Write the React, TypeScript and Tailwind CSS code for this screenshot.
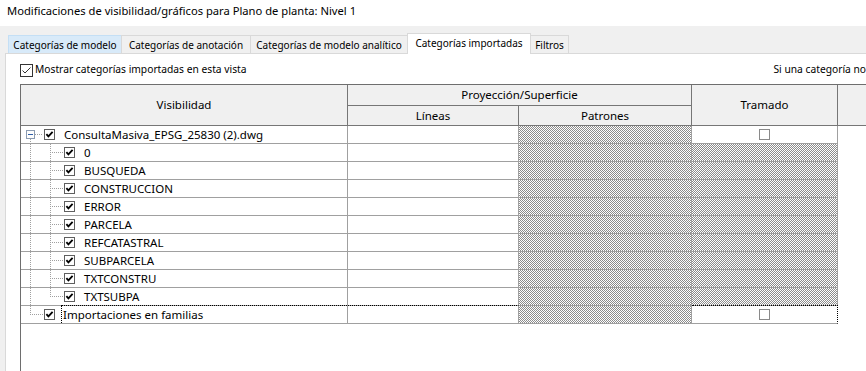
import type { ReactNode } from 'react'

const layers = ['0', 'BUSQUEDA', 'CONSTRUCCION', 'ERROR', 'PARCELA', 'REFCATASTRAL', 'SUBPARCELA', 'TXTCONSTRU', 'TXTSUBPA']

// trama gris de las celdas bloqueadas (1px ajedrez)
const hatch = 'bg-[conic-gradient(#8c8c8c_25%,#fff_0_50%,#8c8c8c_0_75%,#fff_0)] bg-size-[2px_2px]'

function TreeCheck() {
  return (
    <svg width="11" height="11" viewBox="0 0 11 11" className="shrink-0">
      <rect x="0.5" y="0.5" width="10" height="10" fill="#fff" stroke="#5f5f5f" />
      <path d="M2.4 5.2 L4.4 7.4 L8.6 2.8" fill="none" stroke="#000" strokeWidth="1.8" />
    </svg>
  )
}

function EmptyBox() {
  return (
    <svg width="11" height="11" viewBox="0 0 11 11" className="shrink-0">
      <rect x="0.5" y="0.5" width="10" height="10" fill="#fff" stroke="#8a8a8a" />
    </svg>
  )
}

function Dots({ d }: { d: string }) {
  return <path d={d} stroke="#a0a0a0" strokeDasharray="1 1" shapeRendering="crispEdges" fill="none" />
}

function Row({ tree, tramado }: { tree: ReactNode; tramado: 'box' | 'hatch' }) {
  return (
    <div className="flex h-[18px] shrink-0">
      <div className="w-[327px] h-[18px] border-r border-b border-[#a0a0a0] flex items-center">{tree}</div>
      <div className="w-[171px] h-[18px] border-r border-b border-[#a0a0a0] bg-white" />
      <div className={`w-[173px] h-[18px] border-r border-b border-[#a0a0a0] ${hatch}`} />
      {tramado === 'box' ? (
        <div className="w-[146px] h-[18px] border-r border-b border-[#a0a0a0] flex items-center justify-center">
          <EmptyBox />
        </div>
      ) : (
        <div className={`w-[146px] h-[18px] border-r border-b border-[#a0a0a0] ${hatch}`} />
      )}
    </div>
  )
}

export default function App() {
  return (
    <div className="w-[866px] h-[371px] overflow-hidden bg-[#f0f0f0] font-['Noto_Sans',sans-serif] text-[10px] text-black flex flex-col">
      <div className="h-[26px] shrink-0 bg-white pl-[7px] pt-[3px] leading-[16px] text-[11.2px] whitespace-nowrap">
        Modificaciones de visibilidad/gráficos para Plano de planta: Nivel 1
      </div>

      {/* Pestañas */}
      <div className="h-[27px] shrink-0 pt-[7px] pl-[8px] flex items-end relative z-10 whitespace-nowrap leading-[16px]">
        <div className="w-[114px] h-[18px] bg-[#d8eaf9] border-t border-x border-[#c4dff5] flex items-center justify-center">
          Categorías de modelo
        </div>
        <div className="w-[130px] h-[18px] -ml-px border-t border-x border-[#d9d9d9] flex items-center justify-center">
          Categorías de anotación
        </div>
        <div className="w-[158px] h-[18px] -ml-px border-t border-x border-[#d9d9d9] flex items-center justify-center">
          Categorías de modelo analítico
        </div>
        <div className="w-[124px] h-[21px] -ml-px -mb-px bg-white border-t border-x border-[#d9d9d9] flex items-center justify-center pb-[2px]">
          Categorías importadas
        </div>
        <div className="w-[39px] h-[18px] -ml-px border-t border-x border-[#d9d9d9] flex items-center justify-center">
          Filtros
        </div>
      </div>

      <div className="ml-[5px] flex-1 min-h-0 bg-white border-l border-t border-[#d9d9d9] pl-[14px] pt-[8px]">
        <div className="h-[16px] flex items-center whitespace-nowrap text-[10.25px]">
          <div className="w-[757px] flex items-center">
            <svg width="13" height="13" viewBox="0 0 13 13" className="shrink-0">
              <rect x="0.5" y="0.5" width="12" height="12" fill="#fff" stroke="#333" />
              <path d="M2.5 6.5 L5 9 L10.5 3.5" fill="none" stroke="#333" strokeWidth="1" />
            </svg>
            <span className="ml-[2px]">Mostrar categorías importadas en esta vista</span>
          </div>
          <span>Si una categoría no</span>
        </div>

        {/* Tabla */}
        <div className="mt-[6px] h-[320px] border-t border-l border-[#6e6e6e] flex flex-col text-[11.5px]">
          <div className="grid grid-cols-[327px_171px_173px_146px_1fr] grid-rows-[21px_20px] bg-[#f0f0f0] shrink-0 whitespace-nowrap">
            <div className="col-start-1 row-start-1 row-span-2 border-r border-b border-[#767676] flex items-center justify-center">Visibilidad</div>
            <div className="col-start-2 col-span-2 row-start-1 border-r border-b border-[#767676] flex items-center justify-center">Proyección/Superficie</div>
            <div className="col-start-4 row-start-1 row-span-2 border-r border-b border-[#767676] flex items-center justify-center">Tramado</div>
            <div className="col-start-5 row-start-1 row-span-2 border-b border-[#767676]" />
            <div className="col-start-2 row-start-2 border-r border-b border-[#767676] flex items-center justify-center">Líneas</div>
            <div className="col-start-3 row-start-2 border-r border-b border-[#767676] flex items-center justify-center">Patrones</div>
          </div>

          <Row
            tramado="box"
            tree={
              <>
                <svg width="23" height="17" className="shrink-0">
                  <rect x="5.5" y="4.5" width="8" height="8" fill="#fdfdfd" stroke="#8c9cb2" shapeRendering="crispEdges" />
                  <path d="M7 8.5h5" stroke="#2f5fa8" shapeRendering="crispEdges" />
                  <Dots d="M14 8.5h8" />
                  <Dots d="M9.5 13v4" />
                </svg>
                <TreeCheck />
                <span className="ml-[9px] whitespace-nowrap">ConsultaMasiva_EPSG_25830 (2).dwg</span>
              </>
            }
          />

          {layers.map((name, i) => (
            <Row
              key={name}
              tramado="hatch"
              tree={
                <>
                  <svg width="43" height="17" className="shrink-0">
                    <Dots d="M9.5 0v17" />
                    <Dots d={i === layers.length - 1 ? 'M29.5 0v9' : 'M29.5 0v17'} />
                    <Dots d="M31 8.5h11" />
                  </svg>
                  <TreeCheck />
                  <span className="ml-[9px] whitespace-nowrap">{name}</span>
                </>
              }
            />
          ))}

          {/* fila con foco */}
          <div className="flex h-[18px] shrink-0">
            <div className="w-[327px] h-[18px] border-r border-b border-[#a0a0a0] flex items-center">
              <svg width="23" height="17" className="shrink-0">
                <Dots d="M9.5 0v9" />
                <Dots d="M11 8.5h11" />
              </svg>
              <TreeCheck />
              <div className="ml-[6px] -mt-px self-start h-[18px] flex-1 border-t border-l border-dotted border-black pl-[1px] flex items-center whitespace-nowrap">
                Importaciones en familias
              </div>
            </div>
            <div className="w-[171px] -mt-px h-[19px] border-t border-r border-b border-dotted [border-right-style:solid] [border-bottom-style:solid] border-[#a0a0a0] border-t-black" />
            <div className={`w-[173px] h-[18px] border-r border-b border-[#a0a0a0] ${hatch}`} />
            <div className="w-[146px] -mt-px h-[19px] border-t border-r border-b border-dotted [border-bottom-style:solid] border-t-black border-r-black border-b-[#a0a0a0] flex items-center justify-center">
              <EmptyBox />
            </div>
          </div>
        </div>
      </div>
    </div>
  )
}
